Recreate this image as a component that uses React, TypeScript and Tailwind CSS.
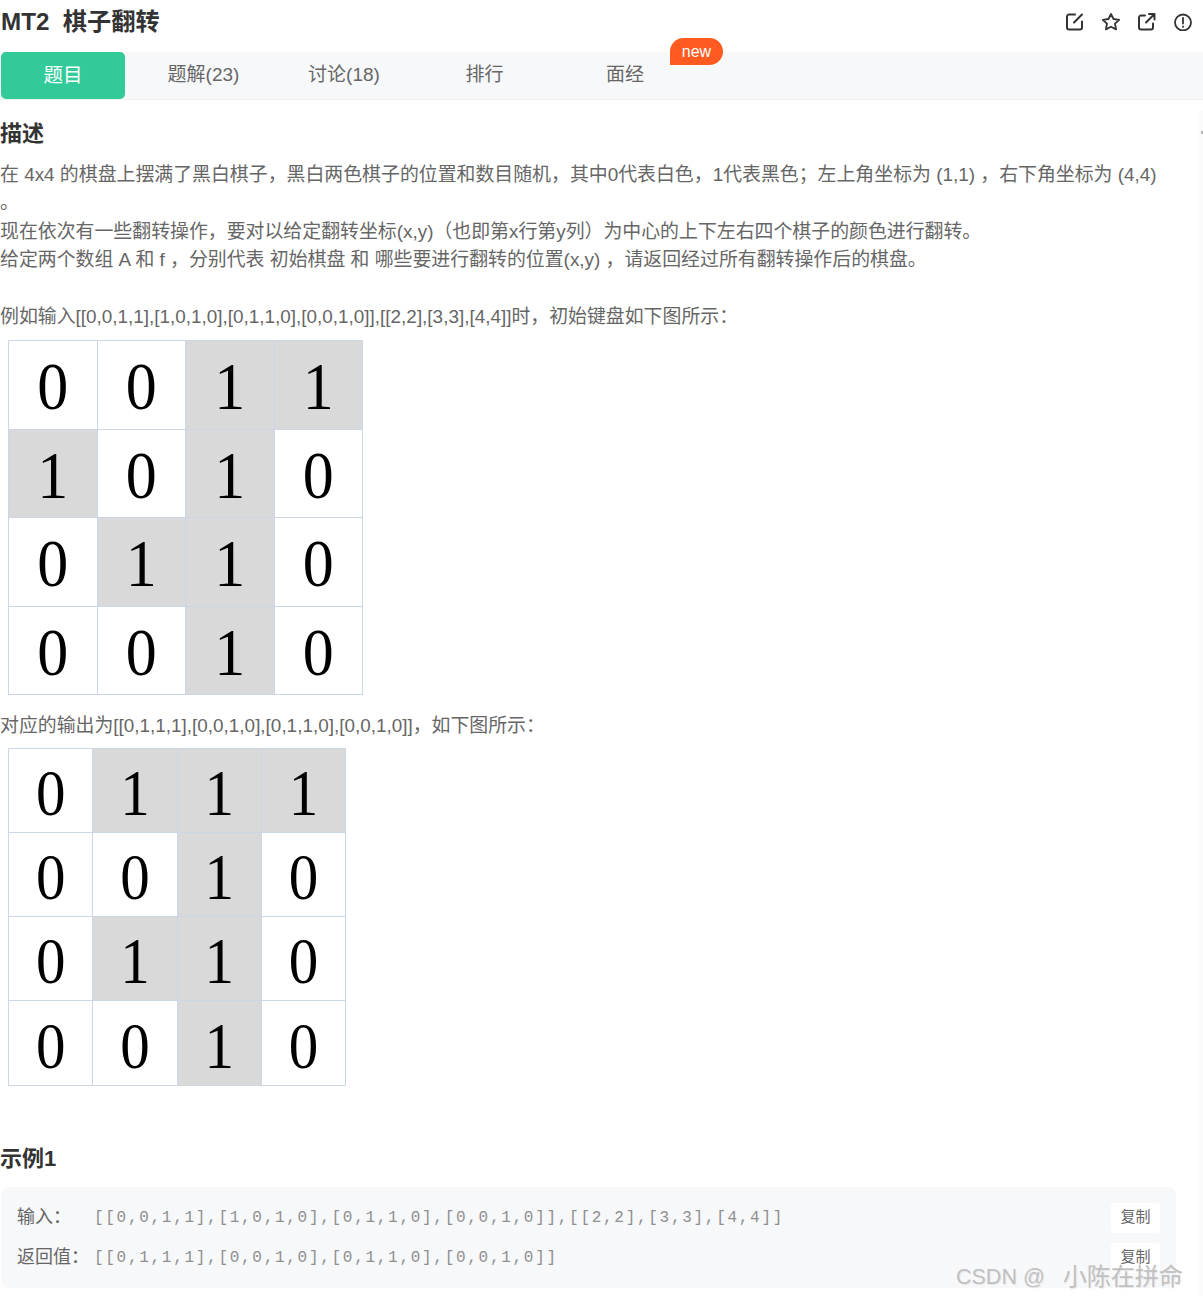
const first = [
  [0, 0, 1, 1],
  [1, 0, 1, 0],
  [0, 1, 1, 0],
  [0, 0, 1, 0],
];

const second = [
  [0, 1, 1, 1],
  [0, 0, 1, 0],
  [0, 1, 1, 0],
  [0, 0, 1, 0],
];

const tabs = ["题解(23)", "讨论(18)", "排行", "面经"];

function Board({ rows, cell }: { rows: number[][]; cell: string }) {
  return (
    <div className="w-fit border-t border-l border-[#cdd6e6] font-['Liberation_Serif',serif] text-black">
      {rows.map((row, i) => (
        <div key={i} className="flex">
          {row.map((v, j) => (
            <div
              key={j}
              className={`${cell} flex items-center justify-center border-r border-b border-[#cdd6e6] ${v ? "bg-[#d9d9d9]" : "bg-white"}`}
            >
              <span className="inline-block scale-y-110">{v}</span>
            </div>
          ))}
        </div>
      ))}
    </div>
  );
}

function Example({ label, value }: { label: string; value: string }) {
  return (
    <div className="flex h-[40px] items-center">
      <span className="w-[77px] shrink-0 text-[18px] text-[#666]">{label}</span>
      <span className="flex-1 font-['Liberation_Mono',monospace] text-[16px] tracking-[1.71px] text-[#8f8f8f]">{value}</span>
      <button className="h-[30px] w-[49px] rounded bg-white text-[15px] text-[#666]">复制</button>
    </div>
  );
}

export default function App() {
  return (
    <div className="relative h-[1296px] w-[1203px] overflow-hidden bg-white font-['Liberation_Sans','Noto_Sans_CJK_SC',sans-serif]">
      {/* header */}
      <div className="flex h-[52px] items-center justify-between pr-[11px]">
        <h1 className="pb-[7px] pl-px text-[24.200px] font-bold text-[#333]">MT2&nbsp;&nbsp;棋子翻转</h1>
        <div className="flex items-center gap-[18px] pb-[9px] text-[#333]">
          <svg className="h-[18px] w-[18px]" viewBox="0 0 18 18" fill="none" stroke="currentColor" strokeWidth="2" strokeLinecap="round" strokeLinejoin="round">
            <path d="M9 1.500H3a2 2 0 0 0-2 2v11a2 2 0 0 0 2 2h11a2 2 0 0 0 2-2V8.500" />
            <path d="M8 9.500 16 1.500" />
          </svg>
          <svg className="h-[18px] w-[18px]" viewBox="0 0 18 18" fill="none" stroke="currentColor" strokeWidth="1.8" strokeLinejoin="round">
            <path d="M9 1 11.500 6 17.200 6.800 13 10.700 14.100 16.400 9 13.700 3.900 16.400 5 10.700 0.800 6.800 6.500 6Z" />
          </svg>
          <svg className="h-[18px] w-[18px]" viewBox="0 0 18 18" fill="none" stroke="currentColor" strokeWidth="2" strokeLinecap="round" strokeLinejoin="round">
            <path d="M7 2.500H3a2 2 0 0 0-2 2v10a2 2 0 0 0 2 2h10a2 2 0 0 0 2-2v-4" />
            <path d="M8 9.500 16 1.500M11 1h5.500V6.500" />
          </svg>
          <svg className="h-[18px] w-[18px]" viewBox="0 0 18 18" fill="none" stroke="currentColor" strokeWidth="1.8" strokeLinecap="round">
            <circle cx="9" cy="9.500" r="8" />
            <path d="M9 5v5.500M9 13.500v.4" />
          </svg>
        </div>
      </div>

      {/* tabs */}
      <div className="relative flex h-[48px] gap-[16.500px] border-b border-[#eef0f3] bg-[#f7f8fa] pl-px">
        <div className="flex h-[47px] w-[124px] items-center justify-center rounded-[5px] bg-[#32ca99] text-[19.500px] text-white">题目</div>
        {tabs.map((t) => (
          <div key={t} className="flex h-[47px] w-[124px] items-center justify-center text-[19px] text-[#666]">
            {t}
          </div>
        ))}
        <span className="absolute left-[670px] top-[-14px] flex h-[27px] w-[53px] items-center justify-center rounded-[14px] rounded-bl-none bg-[#ff5a1f] text-[16px] text-white">new</span>
      </div>

      <div>
        <h2 className="pt-[20px] text-[22px] font-bold leading-[28px] text-[#333]">描述</h2>
        <p className="mt-[12.500px] text-[18.900px] leading-[28.500px] text-[#666]">
          在 4x4 的棋盘上摆满了黑白棋子，黑白两色棋子的位置和数目随机，其中0代表白色，1代表黑色；左上角坐标为 (1,1) ，右下角坐标为 (4,4)
          <br />。<br />
          现在依次有一些翻转操作，要对以给定翻转坐标(x,y)（也即第x行第y列）为中心的上下左右四个棋子的颜色进行翻转。
          <br />
          给定两个数组 A 和 f ，分别代表 初始棋盘 和 哪些要进行翻转的位置(x,y) ，请返回经过所有翻转操作后的棋盘。
          <br />
          <br />
          例如输入[[0,0,1,1],[1,0,1,0],[0,1,1,0],[0,0,1,0]],[[2,2],[3,3],[4,4]]时，初始键盘如下图所示：
        </p>
        <div className="ml-[8px] mt-[8.500px]">
          <Board rows={first} cell="h-[88.500px] w-[88.500px] pt-[4px] text-[62px]" />
        </div>
        <p className="mt-[17px] text-[18.900px] leading-[28.500px] text-[#666]">对应的输出为[[0,1,1,1],[0,0,1,0],[0,1,1,0],[0,0,1,0]]，如下图所示：</p>
        <div className="ml-[8px] mt-[7px]">
          <Board rows={second} cell="h-[84.250px] w-[84.250px] pt-[6px] text-[59px]" />
        </div>
        <h2 className="mt-[59px] text-[22px] font-bold leading-[28px] text-[#333]">示例1</h2>
        <div className="ml-px mt-[14px] h-[101px] w-[1175px] rounded-[8px] bg-[#f7f8fa] pl-[16px] pr-[16px] pt-[11px]">
          <Example label="输入：" value="[[0,0,1,1],[1,0,1,0],[0,1,1,0],[0,0,1,0]],[[2,2],[3,3],[4,4]]" />
          <Example label="返回值：" value="[[0,1,1,1],[0,0,1,0],[0,1,1,0],[0,0,1,0]]" />
        </div>
      </div>

      {/* faint scrollbar strip on the right */}
      <div className="absolute left-[1199px] top-[111px] h-[1185px] w-[4px] bg-[#fbfbfb]">
        <div className="mt-[20px] ml-[2px] h-[3px] w-[2px] bg-[#bbb]" />
      </div>

      {/* csdn watermark */}
      <div className="absolute left-[956px] top-[1262px] flex items-center whitespace-nowrap leading-[30px] text-[#b4b4b4]/80 [text-shadow:1px_1px_1px_#e6e6e6]">
        <span className="text-[21.500px]">CSDN @</span>
        <span className="ml-[18px] text-[24px]">小陈在拼命</span>
      </div>
    </div>
  );
}
